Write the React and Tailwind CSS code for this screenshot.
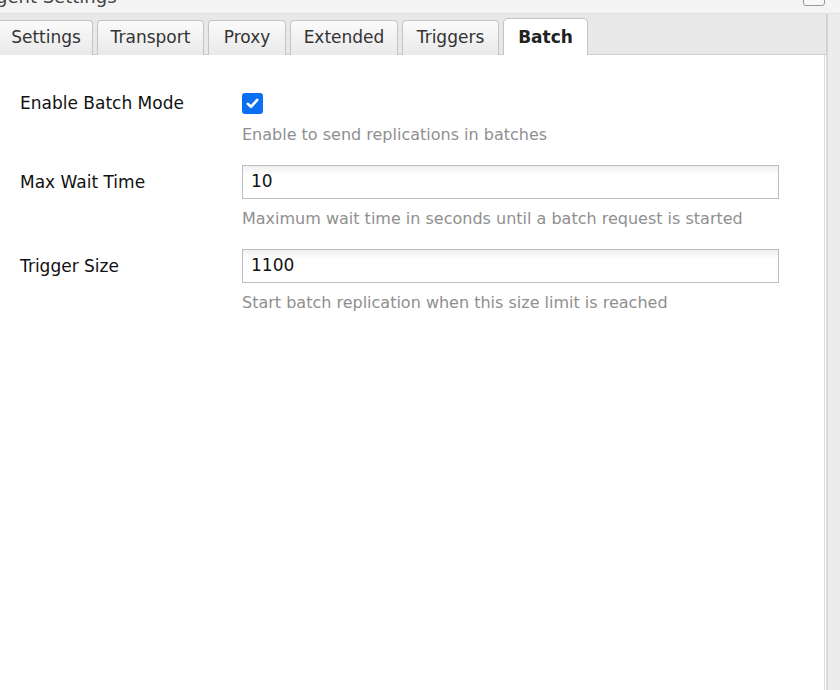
import React from "react";

const tabs = [
  { name: "Settings", w: "w-[93px]", first: true },
  { name: "Transport", w: "w-[107px]" },
  { name: "Proxy", w: "w-[78px]" },
  { name: "Extended", w: "w-[108px]" },
  { name: "Triggers", w: "w-[97px]" },
];

function Field({ label, children, help, helpMt = "mt-[8px]" }) {
  return (
    <div className="flex flex-col">
      <div className="flex items-center">
        <div className="w-[222px] shrink-0 text-[17px] leading-[25px] text-[#111]">{label}</div>
        {children}
      </div>
      <div className={`${helpMt} ml-[222px] text-[16px] leading-[24px] text-[#8f8f8f]`}>{help}</div>
    </div>
  );
}

export default function App() {
  return (
    <div
      className="relative w-[840px] h-[690px] overflow-hidden bg-white"
      style={{ fontFamily: "'DejaVu Sans', Tahoma, sans-serif" }}
    >
      {/* title strip */}
      <div className="h-[14px] bg-[#f4f4f4] relative overflow-hidden border-b border-[#e0e0e0]">
        <div className="absolute left-[-4px] top-[-12px] text-[18px] text-[#444] leading-none">gent Settings</div>
        <div className="absolute left-[803px] top-[-8px] w-[22px] h-[14px] rounded-[3px] border border-[#999] bg-[#f7f7f7]" />
      </div>
      <div className="flex">
        <div className="w-[827px] flex flex-col">
          {/* tab bar */}
          <div className="h-[41px] bg-[#e8e8e8] border-r border-[#d0d0d0] flex items-end gap-[4px] border-b border-[#cfcfcf]">
            {tabs.map((t) => (
              <div
                key={t.name}
                className={`${t.w} h-[35px] -mb-px rounded-t-[4px] border border-b-0 border-[#c4c4c4] bg-gradient-to-b from-[#fbfbfb] to-[#e9e9e9] flex items-center justify-center text-[17px] text-[#333] ${t.first ? "rounded-tl-none border-l-0" : ""}`}
              >
                {t.name}
              </div>
            ))}
            <div className="w-[85px] h-[37px] -mb-px rounded-t-[5px] border border-b-0 border-[#c4c4c4] bg-white flex items-center justify-center text-[17px] font-bold text-[#222] pt-[2px]">
              Batch
            </div>
          </div>
          {/* content */}
          <div className="flex flex-col gap-[18px] pl-[20px] pt-[36px] border-r-[3px] border-double border-[#dcdcdc] h-[635px]">
            <Field label="Enable Batch Mode" help="Enable to send replications in batches" helpMt="mt-[7px]">
              <div className="w-[21px] h-[21px] rounded-[3px] bg-[#0b6ff2] flex items-center justify-center">
                <svg width="15" height="15" viewBox="0 0 15 15">
                  <path d="M2.8 7.8 L6 10.8 L12.2 3.9" fill="none" stroke="white" strokeWidth="2.6" strokeLinecap="round" strokeLinejoin="round" />
                </svg>
              </div>
            </Field>
            <Field label="Max Wait Time" help="Maximum wait time in seconds until a batch request is started">
              <div className="w-[537px] h-[34px] border border-[#bdbdbd] bg-gradient-to-b from-[#f0f0f0] to-white to-[30%] flex items-center pl-[8px] text-[17px] text-[#111]">10</div>
            </Field>
            <Field label="Trigger Size" help="Start batch replication when this size limit is reached">
              <div className="w-[537px] h-[34px] border border-[#bdbdbd] bg-gradient-to-b from-[#f0f0f0] to-white to-[30%] flex items-center pl-[8px] text-[17px] text-[#111]">1100</div>
            </Field>
          </div>
        </div>
        <div className="flex-1 bg-[#ececec] border-l border-[#d6d6d6]" />
      </div>
    </div>
  );
}
